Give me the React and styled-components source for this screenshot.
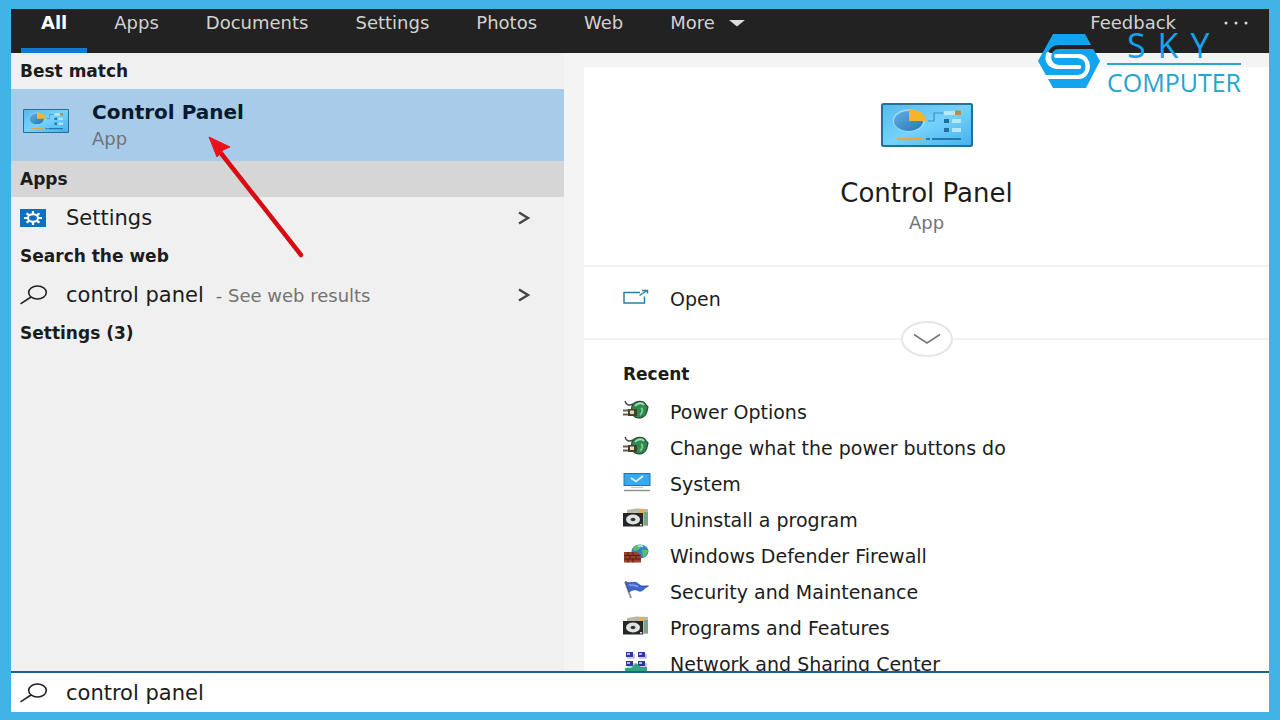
import React, { useState } from 'react';
import styled, { createGlobalStyle } from 'styled-components';

const tabs = ['All', 'Apps', 'Documents', 'Settings', 'Photos', 'Web'];

const SearchIcon = () => (
  <svg width="28" height="20" viewBox="0 0 28 20" fill="none" stroke="#222" strokeWidth="1.6">
    <ellipse cx="17.500" cy="7.500" rx="8.800" ry="6.500" />
    <path d="M11 12 L0.500 18.800" />
  </svg>
);

const ChevronRight = () => (
  <svg width="14" height="14" viewBox="0 0 14 14" fill="none" stroke="#444" strokeWidth="2.4">
    <path d="M2 1.5 L11 7 L2 12.5" />
  </svg>
);

const ControlPanelIcon = ({ width, height }) => (
  <svg width={width} height={height} viewBox="0 0 92 44" preserveAspectRatio="none">
    <defs>
      <linearGradient id="panelFill" x1="0" y1="0" x2="1" y2="1">
        <stop offset="0" stopColor="#55b8ec" />
        <stop offset="0.5" stopColor="#76d2fb" />
        <stop offset="1" stopColor="#45b0ee" />
      </linearGradient>
      <linearGradient id="pieFill" x1="0" y1="0" x2="1" y2="1">
        <stop offset="0" stopColor="#62aee0" />
        <stop offset="1" stopColor="#2478b8" />
      </linearGradient>
    </defs>
    <rect x="1" y="1" width="90" height="42" rx="1.5" fill="url(#panelFill)" stroke="#276f94" strokeWidth="2" />
    <ellipse cx="28" cy="17.5" rx="16" ry="11.2" fill="#9bdcfb" />
    <ellipse cx="27.500" cy="18" rx="14.5" ry="10" fill="url(#pieFill)" />
    <path d="M28 18 V6.500 C38 6.500 45 11 45 18 Z" fill="#f7b32b" />
    <path d="M47 18 H53 V10 H62" fill="none" stroke="#3b8fbd" strokeWidth="1.2" />
    <path d="M63 10 H76 M71 18 H80 M71 27 H80" stroke="#b8e6fb" strokeWidth="4" />
    <rect x="74" y="7.500" width="6" height="4.5" fill="#b58d4c" />
    <rect x="63" y="16" width="5" height="4" fill="#1f6f9f" />
    <rect x="63" y="25" width="5" height="4" fill="#1f6f9f" />
    <path d="M16 36 H42" stroke="#dda94a" strokeWidth="2.4" />
    <path d="M45 36 H49 M51 36 H80" stroke="#2379a8" strokeWidth="2.2" />
  </svg>
);

const GearIcon = () => (
  <svg width="26" height="18" viewBox="0 0 26 18" preserveAspectRatio="none">
    <rect width="26" height="18" fill="#1170bd" />
    <ellipse cx="13" cy="9" rx="5" ry="3.7" fill="none" stroke="#fff" strokeWidth="2" />
    <path
      d="M13 5 V2 M13 13 V16 M8 9 H4 M18 9 H22 M9.500 6.500 L6.500 4.300 M16.500 6.500 L19.500 4.300 M9.500 11.500 L6.500 13.700 M16.500 11.500 L19.500 13.700"
      stroke="#fff"
      strokeWidth="2.2"
    />
  </svg>
);

const OpenIcon = () => (
  <svg width="26" height="16" viewBox="0 0 26 16" fill="none" stroke="#2d7fa8" strokeWidth="1.5">
    <path d="M17 3.500 H1 V14 H21.500 V7.500" />
    <path d="M16.500 6.500 L24 1.500 M19 1.500 H24.500 V4.500" />
  </svg>
);

const PowerIcon = () => (
  <svg width="26" height="20" viewBox="0 0 26 20">
    <path d="M2 1 C3 5 6 6 10 4" fill="none" stroke="#444" strokeWidth="1.4" />
    <path d="M9 6 C12 0 21 0 23 5 L25 7 L24 11 C23 18 16 19 12 17 L8 13 Z" fill="#2f8a4c" stroke="#234b31" strokeWidth="1.2" />
    <path d="M12 6 C15 2.500 19 2.500 21 5" fill="none" stroke="#a9dcb4" strokeWidth="1.8" />
    <path d="M18 8 C20 9 20 12 17 15" fill="none" stroke="#7dca91" strokeWidth="2" />
    <path d="M0 10.500 H7 M0 14.500 H7" stroke="#6d5d42" strokeWidth="1.8" />
    <rect x="5" y="9" width="9" height="7" fill="#433f36" />
    <rect x="7" y="10.500" width="4" height="3.500" fill="#e5dda0" />
  </svg>
);

const SystemIcon = () => (
  <svg width="28" height="20" viewBox="0 0 28 20">
    <rect x="1" y="1.500" width="26" height="12" fill="#38a9f0" stroke="#2574a8" />
    <path d="M8 6 L13 9.500 L20 4" fill="none" stroke="#d9f2ff" strokeWidth="1.8" />
    <path d="M8 15.500 H20" stroke="#b9ccd6" strokeWidth="1.2" />
    <path d="M1 18.500 H27" stroke="#8a8f92" strokeWidth="1.4" />
  </svg>
);

const ProgramsIcon = () => (
  <svg width="26" height="20" viewBox="0 0 26 20">
    <path d="M4 2 L13 0.500 L25 1 V18 H20 V5 H4 Z" fill="#b9b8a9" />
    <rect x="16" y="1" width="5" height="5" fill="#e9ad58" />
    <rect x="21" y="4" width="4" height="13" fill="#7aa58a" />
    <rect x="0" y="5" width="20" height="13.500" fill="#262626" />
    <ellipse cx="10" cy="11.500" rx="7" ry="5" fill="#dfe3e3" />
    <ellipse cx="10" cy="11.500" rx="2.400" ry="1.800" fill="#333" />
    <rect x="17" y="16" width="2" height="1.500" fill="#ddd" />
  </svg>
);

const FirewallIcon = () => (
  <svg width="26" height="20" viewBox="0 0 26 20">
    <ellipse cx="17" cy="7.500" rx="8.500" ry="7" fill="#2e86c4" />
    <path d="M10 4 C13 0 17 1 18 3 L15 6 L11 7 Z M19 6 L25 6 C25 10 22 13 20 13 Z" fill="#62bd6a" />
    <path d="M15 2.500 C17 1.500 19 2 20 3" fill="none" stroke="#c5ecf7" strokeWidth="1.500" />
    <path d="M1 8 H14 L18 11 V18.500 H1 Z" fill="#9c3f2b" />
    <path d="M1 11.500 H17 M1 15 H18 M5 8 V11.500 M10 8 V11.500 M7 11.500 V15 M13 11.500 V15 M5 15 V18.500 M10 15 V18.500" stroke="#55211a" strokeWidth="1" />
  </svg>
);

const FlagIcon = () => (
  <svg width="26" height="20" viewBox="0 0 26 20">
    <path d="M2 2 L8 18" stroke="#8c93a3" strokeWidth="2" />
    <path d="M2.500 1.500 C8 5 11 -0.500 16 4.500 C19 7 22 5.500 25.500 6 C21 8 19 13 15 10.500 C12 9 9 10 6 12 Z" fill="#4066d0" stroke="#2c489e" strokeWidth="0.800" />
    <path d="M6 4.500 C9 6.500 12 3.500 15 7" fill="none" stroke="#86a6ee" strokeWidth="1.500" />
  </svg>
);

const NetworkIcon = () => (
  <svg width="26" height="20" viewBox="0 0 26 20">
    {[[3, 0], [15, 0], [3, 9], [15, 9]].map(([x, y]) => (
      <g key={`${x}-${y}`}>
        <rect x={x} y={y} width="7" height="5" fill="#2f35a5" />
        <rect x={x + 1} y={y + 1} width="3" height="2" fill="#a9b9f3" />
        <path d={`M${x + 1} ${y + 6} H${x + 8} V${y + 2}`} fill="none" stroke="#a4a4b8" strokeWidth="1.2" />
      </g>
    ))}
    <path d="M13 11 L18 15 H24 V20 H2 V16 H8 Z" fill="#2fa583" />
  </svg>
);

const BrandMark = () => (
  <svg width="64" height="58" viewBox="0 0 64 58">
    <mask id="brandCut">
      <rect width="64" height="58" fill="#fff" />
      <g fill="none" stroke="#000" strokeWidth="4">
        <path d="M64 15 H22 C9 15 9 35 22 35 H42" strokeLinecap="round" />
        <path d="M19 24 H41 C54 24 54 45 41 45 H0" />
      </g>
    </mask>
    <path d="M16 2 H48 L63 29 L49 56 H16 L1 29 Z" fill="#12a4ee" mask="url(#brandCut)" />
    <path d="M11 22 C9 30 13 35 22 35 H42 M19 24 H41 C54 24 54 45 41 45 H10" fill="none" stroke="#fff" strokeWidth="4" strokeLinecap="round" />
  </svg>
);

const recentItems = [
  { label: 'Power Options', Icon: PowerIcon },
  { label: 'Change what the power buttons do', Icon: PowerIcon },
  { label: 'System', Icon: SystemIcon },
  { label: 'Uninstall a program', Icon: ProgramsIcon },
  { label: 'Windows Defender Firewall', Icon: FirewallIcon },
  { label: 'Security and Maintenance', Icon: FlagIcon },
  { label: 'Programs and Features', Icon: ProgramsIcon },
  { label: 'Network and Sharing Center', Icon: NetworkIcon },
];

const App = () => {
  const [activeTab, setActiveTab] = useState('All');
  const [query, setQuery] = useState('control panel');

  return (
    <Frame>
      <GlobalStyle />
      <Header>
        <Tabs>
          {tabs.map((tab) => (
            <Tab key={tab} $active={tab === activeTab} onClick={() => setActiveTab(tab)}>
              {tab}
            </Tab>
          ))}
          <Tab>
            More
            <svg width="16" height="8" viewBox="0 0 16 8">
              <path d="M0 1 H16 L8 7.500 Z" fill="#ddd" />
            </svg>
          </Tab>
        </Tabs>
        <HeaderActions>
          <Tab>Feedback</Tab>
          <Tab aria-label="Options">
            <svg width="26" height="4" viewBox="0 0 26 4" fill="#ddd">
              <circle cx="3" cy="2" r="1.500" />
              <circle cx="13" cy="2" r="1.500" />
              <circle cx="23" cy="2" r="1.500" />
            </svg>
          </Tab>
        </HeaderActions>
      </Header>

      <Body>
        <Results>
          <GroupTitle>Best match</GroupTitle>
          <BestMatch>
            <ControlPanelIcon width={46} height={24} />
            <BestMatchText>
              <BestMatchName>Control Panel</BestMatchName>
              <Muted>App</Muted>
            </BestMatchText>
          </BestMatch>
          <GroupTitle $shaded>Apps</GroupTitle>
          <ResultRow>
            <IconSlot><GearIcon /></IconSlot>
            <ResultName>Settings</ResultName>
            <ChevronRight />
          </ResultRow>
          <GroupTitle>Search the web</GroupTitle>
          <ResultRow>
            <IconSlot><SearchIcon /></IconSlot>
            <ResultName>
              control panel
              <ResultHint>- See web results</ResultHint>
            </ResultName>
            <ChevronRight />
          </ResultRow>
          <GroupTitle>Settings (3)</GroupTitle>
        </Results>

        <Details>
          <Hero>
            <ControlPanelIcon width={92} height={44} />
            <HeroTitle>Control Panel</HeroTitle>
            <Muted>App</Muted>
          </Hero>
          <OpenSection>
            <ActionRow>
              <ActionIcon><OpenIcon /></ActionIcon>
              Open
            </ActionRow>
          </OpenSection>
          <Divider>
            <Expand aria-label="Show more actions">
              <svg width="28" height="12" viewBox="0 0 28 12" fill="none" stroke="#777" strokeWidth="1.500">
                <path d="M1 1.500 L14 10 L27 1.500" />
              </svg>
            </Expand>
          </Divider>
          <RecentTitle>Recent</RecentTitle>
          {recentItems.map(({ label, Icon }) => (
            <ActionRow key={label}>
              <ActionIcon><Icon /></ActionIcon>
              {label}
            </ActionRow>
          ))}
        </Details>
      </Body>

      <SearchBar>
        <IconSlot><SearchIcon /></IconSlot>
        <SearchInput aria-label="Search" value={query} onChange={(e) => setQuery(e.target.value)} />
      </SearchBar>

      <Arrow width="110" height="130" viewBox="0 0 110 130">
        <path d="M20 22 L101 125" stroke="#d80a12" strokeWidth="4.5" strokeLinecap="round" />
        <path d="M9 7 L30 17 L23 20 L17 27 Z" fill="#ee1018" stroke="#ee1018" />
      </Arrow>

      <Brand>
        <BrandMark />
        <BrandText>
          <BrandTop>SKY</BrandTop>
          <BrandBottom>COMPUTER</BrandBottom>
        </BrandText>
      </Brand>
    </Frame>
  );
};

export default App;

// Styled Components
const GlobalStyle = createGlobalStyle`
  * {
    box-sizing: border-box;
  }

  body {
    margin: 0;
    font-family: 'DejaVu Sans', sans-serif;
    color: #1c1c1c;
  }

  button, input {
    font: inherit;
    color: inherit;
    border: none;
    background: none;
    padding: 0;
  }

  button {
    cursor: pointer;
  }

  svg {
    flex: none;
    display: block;
  }
`;

const Frame = styled.div`
  position: relative;
  display: flex;
  flex-direction: column;
  height: 100vh;
  padding: 9px 11px 8px;
  background: #41b3e7;
  overflow: hidden;
`;

const Header = styled.header`
  display: flex;
  justify-content: space-between;
  flex: none;
  height: 44px;
  padding: 0 0 0 10px;
  background: #222;
`;

const Tabs = styled.nav`
  display: flex;
  gap: 7px;
`;

const HeaderActions = styled.div`
  display: flex;
  gap: 7px;
`;

const Tab = styled.button`
  display: flex;
  align-items: center;
  gap: 14px;
  padding: 0 20px 12px;
  font-size: 18px;
  font-weight: ${(props) => (props.$active ? 'bold' : 'normal')};
  color: ${(props) => (props.$active ? '#fff' : '#d2d2d2')};
  border-bottom: 5px solid ${(props) => (props.$active ? '#1479d0' : 'transparent')};
`;

const Body = styled.main`
  flex: 1;
  min-height: 0;
  display: grid;
  grid-template-columns: 553fr 685fr;
  column-gap: 20px;
  background: #f4f4f4;
`;

const Results = styled.section`
  background: #f0f0f0;
`;

const GroupTitle = styled.h2`
  display: flex;
  align-items: center;
  height: 36px;
  margin: 0;
  padding: 0 9px;
  font-size: 17px;
  background: ${(props) => (props.$shaded ? '#d6d6d6' : 'transparent')};
`;

const BestMatch = styled.button`
  display: flex;
  align-items: center;
  gap: 23px;
  width: 100%;
  height: 72px;
  padding: 0 12px 8px;
  text-align: left;
  background: #a8cbe9;
`;

const BestMatchText = styled.span`
  display: flex;
  flex-direction: column;
  gap: 3px;
  padding-top: 9px;
`;

const BestMatchName = styled.span`
  font-size: 20px;
  line-height: 24px;
  font-weight: bold;
  color: #061a30;
`;

const Muted = styled.span`
  font-size: 18px;
  line-height: 24px;
  color: #6f7478;
`;

const ResultRow = styled.button`
  display: flex;
  align-items: center;
  width: 100%;
  height: 41px;
  padding: 0 33px 0 9px;
  text-align: left;
`;

const IconSlot = styled.span`
  flex: none;
  width: 46px;
`;

const ResultName = styled.span`
  display: flex;
  align-items: baseline;
  gap: 12px;
  flex: 1;
  font-size: 21px;
`;

const ResultHint = styled.span`
  font-size: 18px;
  color: #737373;
`;

const Details = styled.section`
  margin-top: 14px;
  background: #fff;
  overflow: hidden;
`;

const Hero = styled.div`
  display: flex;
  flex-direction: column;
  align-items: center;
  height: 200px;
  padding-top: 36px;
  border-bottom: 2px solid #f1f1f1;
`;

const HeroTitle = styled.h1`
  margin: 30px 0 2px;
  font-size: 26px;
  line-height: 32px;
  font-weight: normal;
`;

const OpenSection = styled.div`
  padding: 14px 0 4px;
`;

const ActionRow = styled.button`
  display: flex;
  align-items: center;
  width: 100%;
  height: 36px;
  padding: 0 39px;
  font-size: 19px;
  text-align: left;
`;

const ActionIcon = styled.span`
  flex: none;
  width: 47px;
  padding-bottom: 4px;
`;

const Divider = styled.div`
  display: flex;
  align-items: center;

  &::before,
  &::after {
    content: '';
    flex: 1;
    height: 2px;
    background: #f1f1f1;
  }
`;

const Expand = styled.button`
  display: flex;
  align-items: center;
  justify-content: center;
  width: 52px;
  height: 36px;
  border: 2px solid #e6e6e6;
  border-radius: 50%;
`;

const RecentTitle = styled.h2`
  margin: 0;
  padding: 0 39px 2px;
  font-size: 17px;
  line-height: 35px;
`;

const SearchBar = styled.label`
  display: flex;
  align-items: center;
  flex: none;
  height: 41px;
  padding: 0 9px;
  background: #fff;
  border-top: 2px solid #17608f;
`;

const SearchInput = styled.input`
  flex: 1;
  min-width: 0;
  font-size: 21px;
  outline: none;
`;

const Arrow = styled.svg`
  position: absolute;
  left: 200px;
  top: 130px;
  pointer-events: none;
`;

const Brand = styled.div`
  position: absolute;
  top: 28px;
  right: 39px;
  display: flex;
  align-items: center;
  gap: 6px;
  font-family: 'Open Sans', sans-serif;
  color: #24a5cf;
  pointer-events: none;
`;

const BrandText = styled.div`
  display: flex;
  flex-direction: column;
  padding-top: 3px;
  margin-bottom: -6px;
`;

const BrandTop = styled.span`
  padding: 0 0 4px 20px;
  font-size: 34px;
  line-height: 28px;
  letter-spacing: 12px;
  color: #12a4ee;
  border-bottom: 2px solid #2aa7cb;
`;

const BrandBottom = styled.span`
  font-size: 25px;
  line-height: 34px;
`;
